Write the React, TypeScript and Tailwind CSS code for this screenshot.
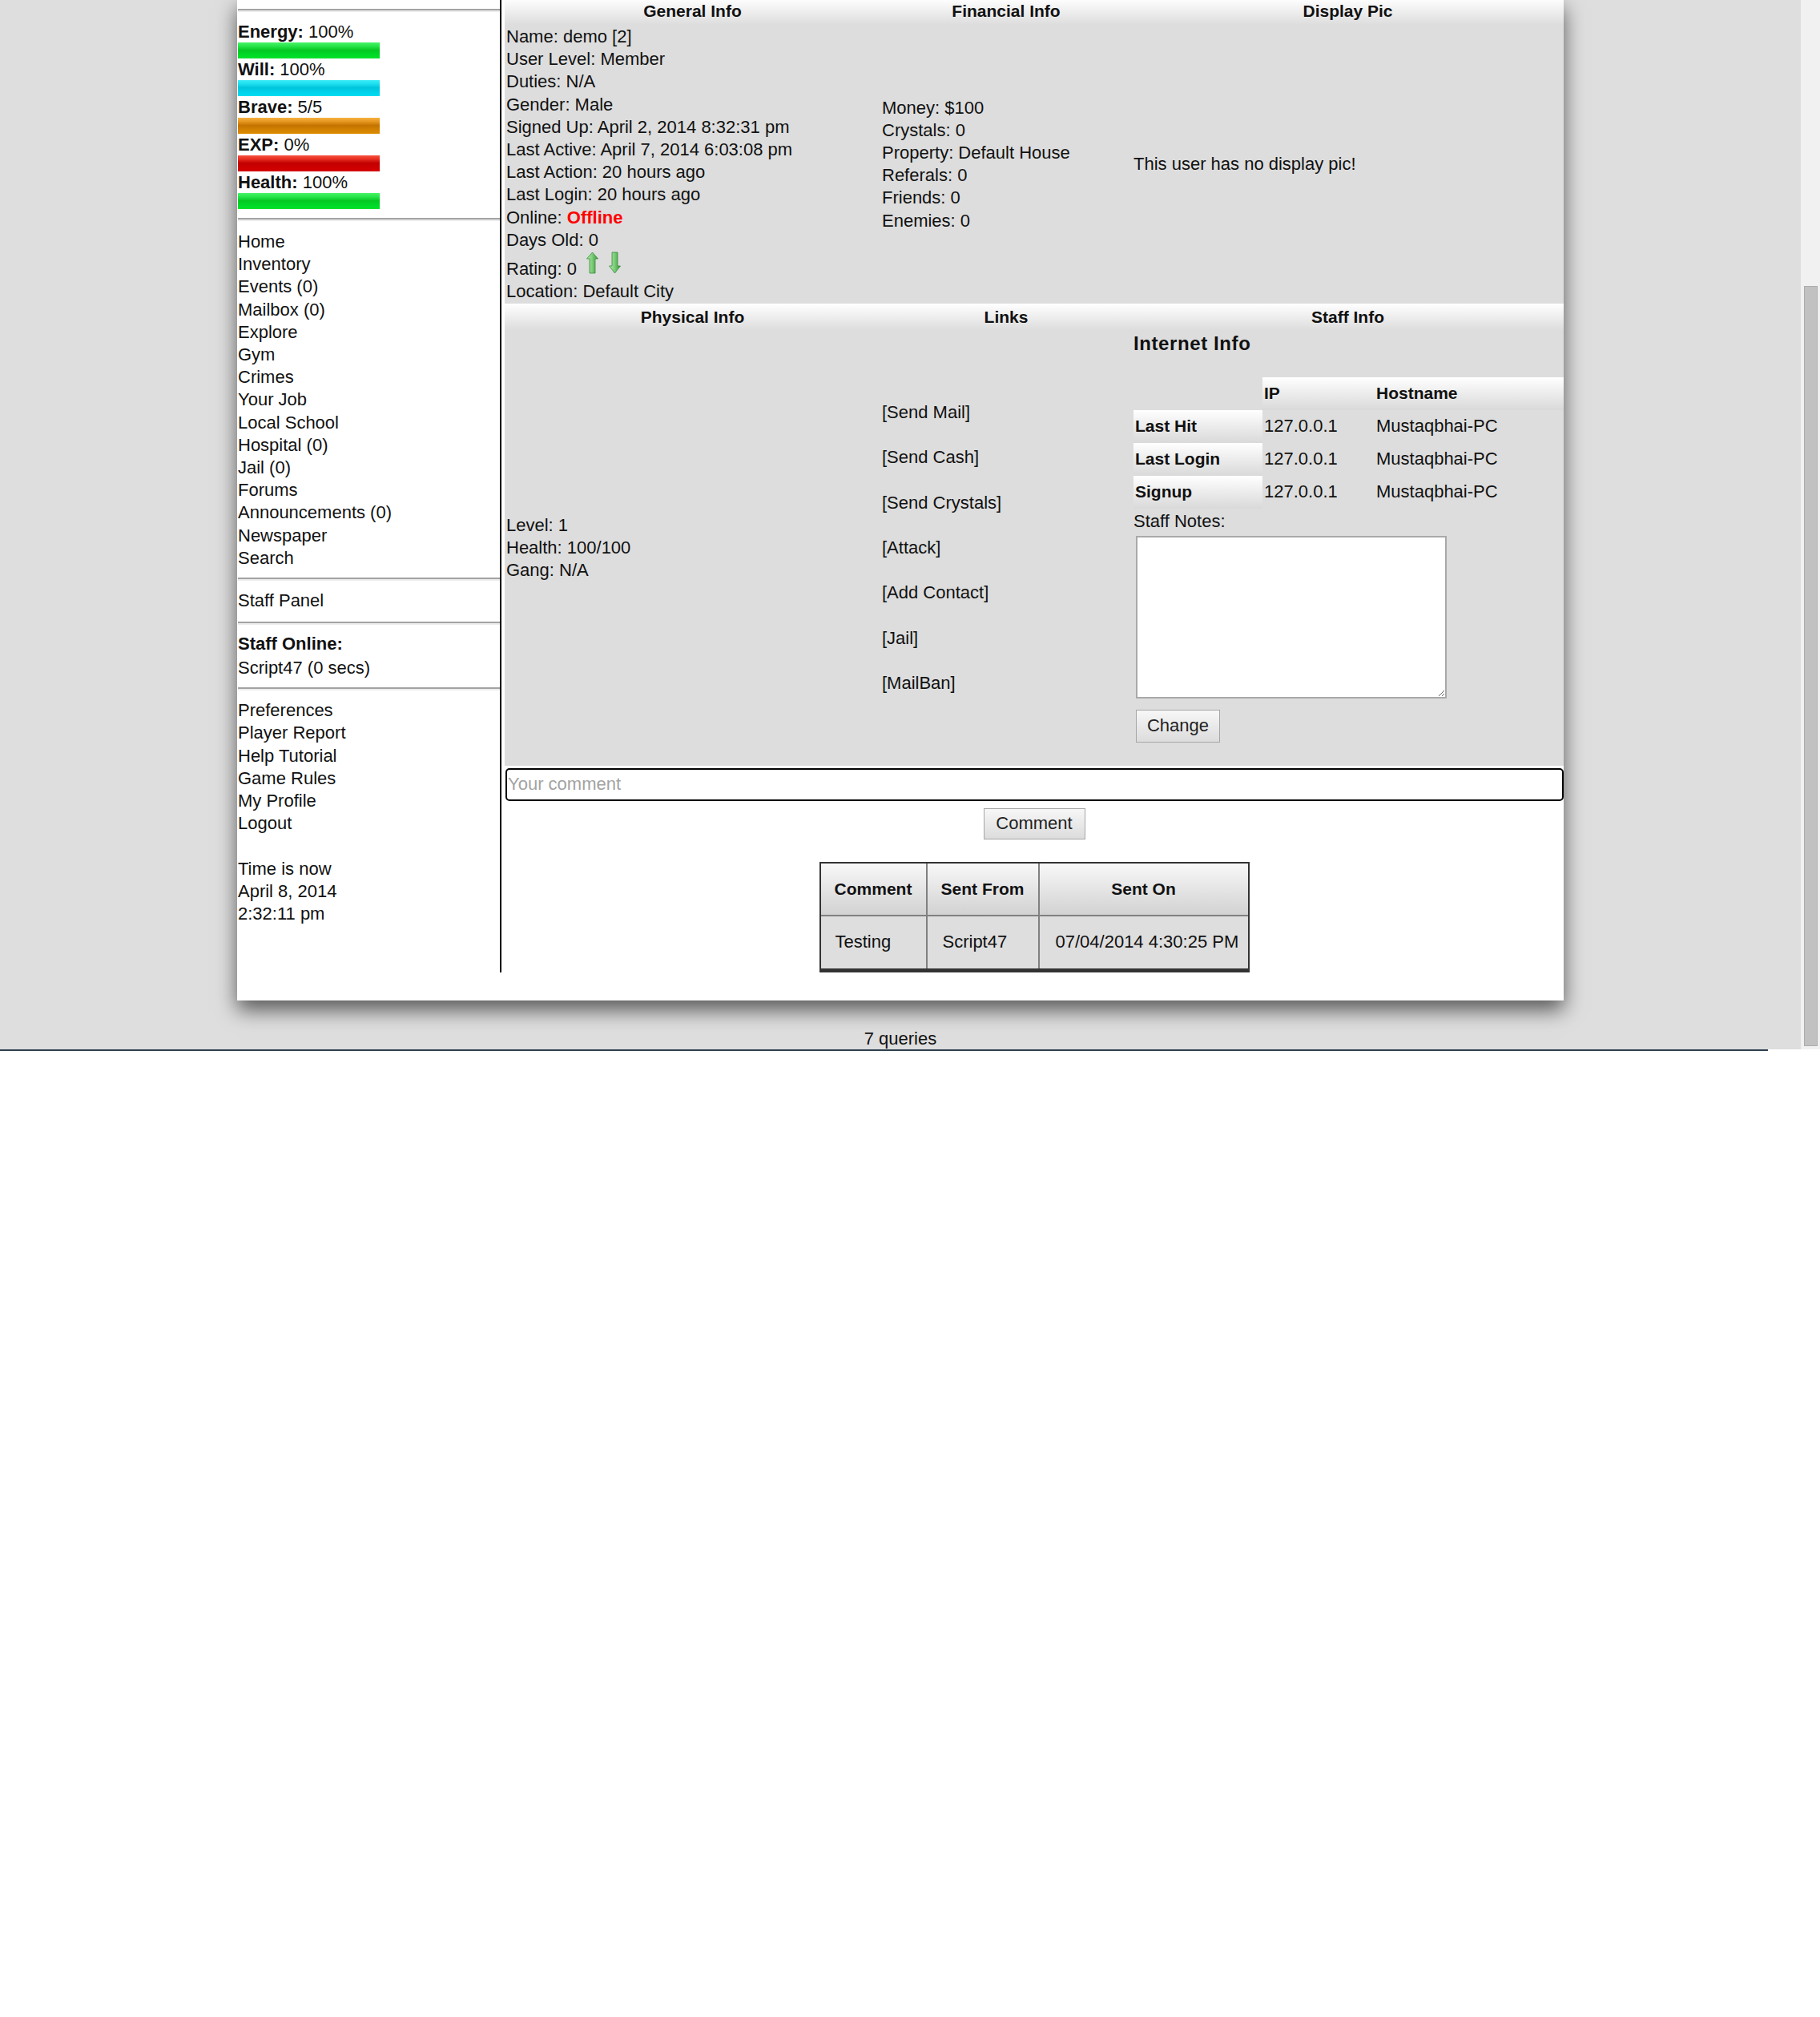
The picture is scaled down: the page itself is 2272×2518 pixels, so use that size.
import { FC, ReactNode } from 'react';

const stats = [
  {
    label: 'Energy:',
    value: '100%',
    bar: 'bg-[linear-gradient(to_bottom,#46f466_0%,#2ae54c_22%,#05c823_48%,#00d826_75%,#00e22c_100%)]',
  },
  {
    label: 'Will:',
    value: '100%',
    bar: 'bg-[linear-gradient(to_bottom,#40ecf7_0%,#1ee0f0_22%,#00c4db_48%,#00d2ea_75%,#00dcf2_100%)]',
  },
  {
    label: 'Brave:',
    value: '5/5',
    bar: 'bg-[linear-gradient(to_bottom,#f5b040_0%,#e89a22_22%,#c47300_48%,#d28200_75%,#dc8c00_100%)]',
  },
  {
    label: 'EXP:',
    value: '0%',
    bar: 'bg-[linear-gradient(to_bottom,#f75040_0%,#e83022_22%,#c20000_48%,#cc0000_75%,#d40000_100%)]',
  },
  {
    label: 'Health:',
    value: '100%',
    bar: 'bg-[linear-gradient(to_bottom,#46f466_0%,#2ae54c_22%,#05c823_48%,#00d826_75%,#00e22c_100%)]',
  },
];

const mainLinks = [
  'Home',
  'Inventory',
  'Events (0)',
  'Mailbox (0)',
  'Explore',
  'Gym',
  'Crimes',
  'Your Job',
  'Local School',
  'Hospital (0)',
  'Jail (0)',
  'Forums',
  'Announcements (0)',
  'Newspaper',
  'Search',
];

const userLinks = ['Preferences', 'Player Report', 'Help Tutorial', 'Game Rules', 'My Profile', 'Logout'];

const actionLinks = ['[Send Mail]', '[Send Cash]', '[Send Crystals]', '[Attack]', '[Add Contact]', '[Jail]', '[MailBan]'];

const ipRows = [
  { label: 'Last Hit', ip: '127.0.0.1', host: 'Mustaqbhai-PC' },
  { label: 'Last Login', ip: '127.0.0.1', host: 'Mustaqbhai-PC' },
  { label: 'Signup', ip: '127.0.0.1', host: 'Mustaqbhai-PC' },
];

const Hr: FC<{ className?: string }> = ({ className = '' }) => (
  <div className={`h-[4px] border-t-2 border-[#a3a3a3] bg-[#ececec] ${className}`} />
);

const HeadCell: FC<{ children: ReactNode }> = ({ children }) => (
  <th className="h-[33px] p-0 text-center align-middle text-[21px] font-bold leading-[28.2px] bg-linear-to-b from-white to-[#dddddd]">
    {children}
  </th>
);

const ArrowUp: FC = () => (
  <svg width="22" height="29" viewBox="0 0 22 29" className="inline align-baseline">
    <defs>
      <linearGradient id="rateUp" x1="0" x2="1" y1="0" y2="0">
        <stop offset="0" stopColor="#b2ebab" />
        <stop offset="0.45" stopColor="#7fd07c" />
        <stop offset="1" stopColor="#3d953d" />
      </linearGradient>
    </defs>
    <path
      d="M13.5 1 L20.5 9 L17 9 L17 27 L10 27 L10 9 L6.5 9 Z"
      fill="url(#rateUp)"
      stroke="#3a8a3a"
      strokeWidth="0.8"
      strokeLinejoin="round"
    />
  </svg>
);

const ArrowDown: FC = () => (
  <svg width="22" height="29" viewBox="0 0 22 29" className="inline align-baseline">
    <defs>
      <linearGradient id="rateDown" x1="0" x2="1" y1="0" y2="0">
        <stop offset="0" stopColor="#b2ebab" />
        <stop offset="0.45" stopColor="#7fd07c" />
        <stop offset="1" stopColor="#3d953d" />
      </linearGradient>
    </defs>
    <path
      d="M10 1 L17 1 L17 18 L20.5 18 L13.5 27 L6.5 18 L10 18 Z"
      fill="url(#rateDown)"
      stroke="#3a8a3a"
      strokeWidth="0.8"
      strokeLinejoin="round"
    />
  </svg>
);

const Sidebar: FC = () => (
  <div className="w-[330px] shrink-0 border-r-2 border-black pt-[13px] pl-[1px] text-[22px] leading-[28.2px]">
    <Hr />
    <div className="mt-[11px]">
      {stats.map((s) => (
        <div key={s.label}>
          <div className="leading-[27px]">
            <b className="font-bold">{s.label}</b> {s.value}
          </div>
          <div className={`h-[20px] w-[177px] ${s.bar}`} />
        </div>
      ))}
    </div>
    <Hr className="mt-[11px]" />
    <div className="mt-[12px]">
      {mainLinks.map((l) => (
        <div key={l}>{l}</div>
      ))}
    </div>
    <Hr className="mt-[10px]" />
    <div className="mt-[11px]">Staff Panel</div>
    <Hr className="mt-[12px]" />
    <div className="mt-[10px] font-bold">Staff Online:</div>
    <div className="mt-[2px]">Script47 (0 secs)</div>
    <Hr className="mt-[9.5px]" />
    <div className="mt-[11px]">
      {userLinks.map((l) => (
        <div key={l}>{l}</div>
      ))}
      <div className="mt-[28.2px]">Time is now</div>
      <div>April 8, 2014</div>
      <div>2:32:11 pm</div>
    </div>
  </div>
);

const StaffInfo: FC = () => (
  <div className="pt-[1px] pb-[29px]">
    <div className="mt-[2px] text-[24px] font-bold leading-[28.2px] tracking-[0.6px]">Internet Info</div>
    <table className="mt-[27px] w-[537px] table-fixed border-collapse">
      <colgroup>
        <col className="w-[161px]" />
        <col className="w-[140px]" />
        <col />
      </colgroup>
      <tbody>
        <tr className="h-[41px]">
          <th className="p-0" />
          <th className="px-[2px] text-left align-middle text-[21px] font-bold bg-linear-to-b from-white to-[#d9d9d9]">IP</th>
          <th className="px-[2px] text-left align-middle text-[21px] font-bold bg-linear-to-b from-white to-[#d9d9d9]">
            Hostname
          </th>
        </tr>
        {ipRows.map((r) => (
          <tr key={r.label} className="h-[41px]">
            <th className="px-[2px] text-left align-middle text-[21px] font-bold bg-linear-to-b from-white to-[#d9d9d9]">
              {r.label}
            </th>
            <td className="px-[2px] align-middle">{r.ip}</td>
            <td className="px-[2px] align-middle">{r.host}</td>
          </tr>
        ))}
      </tbody>
    </table>
    <div className="mt-[2px]">Staff Notes:</div>
    <textarea className="mt-[4px] ml-[3px] block h-[203px] w-[388px] border-2 border-[#a9a9a9] bg-white" />
    <button className="mt-[14px] ml-[3px] block h-[41px] w-[105px] border border-[#a6a6a6] bg-linear-to-b from-[#f7f7f7] to-[#dcdcdc] text-[22px] text-[#222]">
      Change
    </button>
  </div>
);

const MainColumn: FC = () => (
  <div className="flex-1 pl-[4px] text-[22px] leading-[28.2px]">
    <table className="w-full table-fixed border-collapse bg-[#dddddd]">
      <colgroup>
        <col className="w-[469px]" />
        <col className="w-[314px]" />
        <col />
      </colgroup>
      <tbody>
        <tr>
          <HeadCell>General Info</HeadCell>
          <HeadCell>Financial Info</HeadCell>
          <HeadCell>Display Pic</HeadCell>
        </tr>
        <tr>
          <td className="py-[1px] pl-[2px] align-middle">
            <div>Name: demo [2]</div>
            <div>User Level: Member</div>
            <div>Duties: N/A</div>
            <div>Gender: Male</div>
            <div>Signed Up: April 2, 2014 8:32:31 pm</div>
            <div>Last Active: April 7, 2014 6:03:08 pm</div>
            <div>Last Action: 20 hours ago</div>
            <div>Last Login: 20 hours ago</div>
            <div>
              Online: <b className="font-bold text-[#ff0000]">Offline</b>
            </div>
            <div>Days Old: 0</div>
            <div>
              Rating: 0 <ArrowUp /> <ArrowDown />
            </div>
            <div>Location: Default City</div>
          </td>
          <td className="py-[1px] pl-[2px] align-middle">
            <div>Money: $100</div>
            <div>Crystals: 0</div>
            <div>Property: Default House</div>
            <div>Referals: 0</div>
            <div>Friends: 0</div>
            <div>Enemies: 0</div>
          </td>
          <td className="py-[1px] pl-[2px] align-middle">This user has no display pic!</td>
        </tr>
        <tr>
          <HeadCell>Physical Info</HeadCell>
          <HeadCell>Links</HeadCell>
          <HeadCell>Staff Info</HeadCell>
        </tr>
        <tr>
          <td className="py-[1px] pl-[2px] align-middle">
            <div>Level: 1</div>
            <div>Health: 100/100</div>
            <div>Gang: N/A</div>
          </td>
          <td className="py-[1px] pl-[2px] align-middle">
            <div className="flex flex-col gap-[28.2px]">
              {actionLinks.map((l) => (
                <div key={l}>{l}</div>
              ))}
            </div>
          </td>
          <td className="pl-[2px] align-top">
            <StaffInfo />
          </td>
        </tr>
      </tbody>
    </table>

    <input
      className="mt-[3px] ml-[1px] block h-[41px] w-[1321px] rounded-[5px] border-2 border-black bg-white px-[1px] text-[22px] placeholder:text-[#a3a3a3]"
      placeholder="Your comment"
    />
    <button className="mx-auto mt-[9px] block h-[39px] w-[127px] border border-[#a6a6a6] bg-linear-to-b from-[#f7f7f7] to-[#dcdcdc] text-[22px] text-[#222]">
      Comment
    </button>

    <table className="mx-auto mt-[28px] border-separate border-spacing-0 border-2 border-b-[5px] border-[#333333]">
      <tbody>
        <tr>
          <th className="h-[66px] w-[133px] border-r-2 border-b-2 border-[#808080] text-center align-middle text-[21px] font-bold bg-linear-to-b from-[#f8f8f8] to-[#d2d2d2]">
            Comment
          </th>
          <th className="w-[140px] border-r-2 border-b-2 border-[#808080] text-center align-middle text-[21px] font-bold bg-linear-to-b from-[#f8f8f8] to-[#d2d2d2]">
            Sent From
          </th>
          <th className="w-[260px] border-b-2 border-[#808080] text-center align-middle text-[21px] font-bold bg-linear-to-b from-[#f8f8f8] to-[#d2d2d2]">
            Sent On
          </th>
        </tr>
        <tr className="bg-[#dedede]">
          <td className="h-[65px] border-r-2 border-[#808080] pl-[18px] align-middle">Testing</td>
          <td className="border-r-2 border-[#808080] pl-[19px] align-middle">Script47</td>
          <td className="pl-[20px] align-middle">07/04/2014 4:30:25 PM</td>
        </tr>
      </tbody>
    </table>
  </div>
);

const App: FC = () => {
  return (
    <div className="w-[2272px] font-['Liberation_Sans',Arial,sans-serif] text-[#111]">
      <div className="flex h-[1310px] overflow-hidden">
        <div className="w-[2248px] bg-[#dedede]">
          <div className="mx-auto -mt-[2px] flex w-[1656px] bg-white pb-[35px] shadow-[0_12px_24px_rgba(0,0,0,0.6)]">
            <Sidebar />
            <MainColumn />
          </div>
          <div className="mt-[34px] text-center text-[22px] leading-[28.2px]">7 queries</div>
        </div>
        <div className="w-[24px] bg-[#f1f1f1] pt-[357px] pl-[4px]">
          <div className="h-[949px] w-[17px] border border-[#acacac] bg-[#c1c1c1]" />
        </div>
      </div>
      <div className="h-[2px] w-[2207px] bg-[#2f4050]" />
    </div>
  );
};

export default App;
